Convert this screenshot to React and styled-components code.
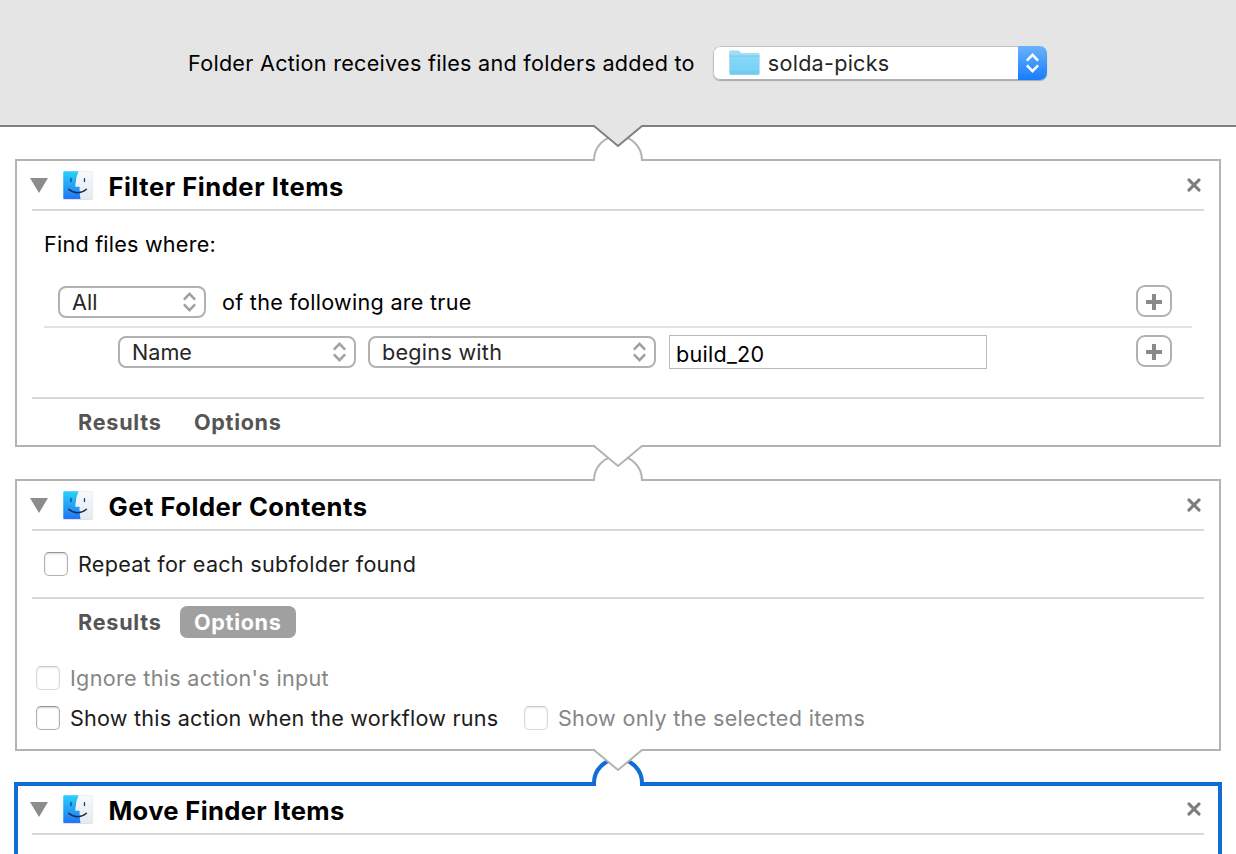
import React from "react";
import styled, { createGlobalStyle, css } from "styled-components";

const Global = createGlobalStyle`
  *, *::before, *::after { box-sizing: border-box; }
  html, body { margin: 0; padding: 0; height: 854px; overflow: hidden; background: #fff; }
  body { font-family: Inter, "Liberation Sans", sans-serif; font-size: 21.6px; line-height: 28px; color: #000; }
  button, input { font: inherit; color: inherit; margin: 0; padding: 0; background: none; border: 0; outline: 0; text-align: left; }
  svg { display: block; flex: none; overflow: visible; }
`;

const Window = styled.div`
  width: 1236px;
  height: 854px;
  overflow: hidden;
  display: flex;
  flex-direction: column;
`;

const Header = styled.header`
  flex: none;
  display: flex;
  align-items: center;
  height: 127px;
  padding: 1px 0 0 188px;
  background: #e5e5e5;
  border-bottom: 2px solid #808080;
`;

const Text = styled.span`
  white-space: nowrap;
  letter-spacing: ${(p) => p.$track ?? 0.27}px;
`;

const FolderSelect = styled.button`
  display: flex;
  align-items: stretch;
  width: 334px;
  height: 34px;
  margin-left: 18px;
  border-radius: 7px;
  background: #fff;
  box-shadow: 0 1px 1px 0 #a8a8a8;
  overflow: hidden;
`;

const FolderValue = styled.span`
  flex: 1;
  display: flex;
  align-items: center;
  gap: 8px;
  padding-left: 15px;
  border: 1px solid #c2c2c2;
  border-right: 0;
  border-bottom-color: #b0b0b0;
  border-radius: 7px 0 0 7px;
  color: #262626;
`;

const BlueCap = styled.span`
  width: 29px;
  display: grid;
  place-items: center;
  background: linear-gradient(#6bb2fa, #167dff);
`;

const Joint = styled.div`
  position: relative;
  z-index: 2;
  flex: none;
  width: 48px;
  height: ${(p) => p.$height}px;
  margin-left: 594px;
`;

const JointArt = styled.svg`
  position: absolute;
  left: 0;
  top: 0;
`;

const Card = styled.section`
  flex: none;
  display: flex;
  flex-direction: column;
  height: ${(p) => p.$height}px;
  margin: 0 ${(p) => (p.$active ? 14 : 15)}px;
  padding: 0 ${(p) => (p.$active ? 14 : 15)}px;
  border: ${(p) => (p.$active ? "4px solid #126cd6" : "2px solid #b3b3b3")};
  background: #fff;
`;

const CardHead = styled.div`
  flex: none;
  display: flex;
  align-items: center;
  height: ${(p) => (p.$active ? 49 : 50)}px;
  padding-right: 3px;
  padding-bottom: ${(p) => (p.$active ? 1 : 0)}px;
  border-bottom: 2px solid #d8d8d8;
`;

const Disclosure = styled.button`
  width: 18px;
  margin-left: -2px;
  margin-right: 15px;
`;

const Title = styled.h2`
  flex: 1;
  margin: 0;
  padding: 3px 0 0 15.4px;
  font-size: 25.6px;
  font-weight: 700;
  line-height: 32px;
`;

const Intro = styled.div`
  display: flex;
  align-items: center;
  height: 66px;
  padding-left: 12px;
`;

const Rule = styled.div`
  display: flex;
  align-items: center;
  height: ${(p) => p.$height}px;
  margin: 0 12px;
  padding-left: ${(p) => p.$indent}px;
  padding-right: 20px;
  ${(p) => p.$divided && css`border-bottom: 2px solid #e3e3e3;`}
`;

const Select = styled.button`
  display: flex;
  align-items: center;
  justify-content: space-between;
  width: ${(p) => p.$width}px;
  height: 32px;
  margin-right: ${(p) => p.$gap}px;
  padding: 0 8.5px 0 12px;
  border: 2px solid #b1b1b1;
  border-radius: 8px;
  color: #262626;
`;

const Field = styled.input`
  width: 318px;
  height: 34px;
  padding: 3px 0 0 6px;
  border: 1px solid #b9b9b9;
  background: #fff;
  letter-spacing: 0.25px;
`;

const AddButton = styled.button`
  display: grid;
  place-items: center;
  width: 36px;
  height: 32px;
  margin: -2px 0 0 auto;
  border: 2px solid #b1b1b1;
  border-radius: 9px;
`;

const PlusIcon = styled.svg`
  margin-top: 2px;
`;

const Spacer = styled.div`
  flex: 1;
`;

const Tabs = styled.div`
  display: flex;
  align-items: center;
  height: 48px;
  padding-left: 32px;
  gap: 5px;
  border-top: 2px solid #d8d8d8;
  font-weight: 700;
`;

const Tab = styled.button`
  width: ${(p) => p.$width}px;
  height: 32px;
  padding: 0 14px;
  border-radius: 7px;
  white-space: nowrap;
  color: ${(p) => (p.$on ? "#fff" : "#555")};
  background: ${(p) => (p.$on ? "#a0a0a0" : "transparent")};
`;

const Options = styled.div`
  padding-bottom: 11px;
`;

const CheckRow = styled.div`
  display: flex;
  align-items: center;
  height: ${(p) => p.$height}px;
  padding-left: ${(p) => p.$indent}px;
  gap: 25.5px;
`;

const Check = styled.label`
  display: flex;
  align-items: center;
  gap: 10px;
  color: ${(p) => (p.$disabled ? "#868686" : "#1c1c1c")};
`;

const Box = styled.span`
  width: 24px;
  height: 24px;
  border: 1px solid ${(p) => (p.$disabled ? "#d6d6d6" : "#b0b0b0")};
  border-top-color: ${(p) => (p.$disabled ? "#cccccc" : "#969696")};
  border-radius: 5px;
  background: #fff;
  box-shadow: inset 0 1px 2px ${(p) => (p.$disabled ? "#e6e6e6" : "#d4d4d4")};
`;

const Chevrons = ({ color = "#a0a0a0" }) => (
  <svg width="13" height="20" viewBox="0 0 13 20" fill="none" stroke={color} strokeWidth="2.5">
    <path d="M0.9 7.6 6.5 1.9l5.6 5.7M0.9 12.4l5.6 5.7 5.6-5.7" />
  </svg>
);

const Plus = () => (
  <PlusIcon width="16" height="16" viewBox="0 0 16 16" stroke="#8a8a8a" strokeWidth="4">
    <path d="M8 0v16M0 8h16" />
  </PlusIcon>
);

const Cross = () => (
  <svg width="14" height="14" viewBox="0 0 14 14" stroke="#7d7d7d" strokeWidth="3" strokeLinecap="round">
    <path d="M1.9 1.9l10.2 10.2M12.1 1.9L1.9 12.1" />
  </svg>
);

const Folder = () => (
  <svg width="31" height="26" viewBox="0 0 31 26">
    <defs>
      <linearGradient id="folder" x1="0" y1="0" x2="0" y2="1">
        <stop offset="0" stopColor="#87d9f8" />
        <stop offset="1" stopColor="#77d0f5" />
      </linearGradient>
    </defs>
    <path d="M.5 2Q.5.8 1.7.8H9q.9 0 1.5.8l1.1 1.3q.4.5 1 .5h16.6q1.2 0 1.2 1.2v19q0 1.2-1.2 1.2H1.7Q.5 24.8.5 23.6z" fill="#6bc0e4" />
    <path d="M.5 2Q.5.8 1.7.8H9q.9 0 1.5.8l1.1 1.3q.4.5 1 .5h16.6q1.2 0 1.2 1.2V7H.5z" fill="#a0def5" />
    <path d="M.8 6h29.4v16.8q0 1-1 1H1.8q-1 0-1-1z" fill="url(#folder)" />
    <path d="M.8 6h29.4M.8 22h29.4" stroke="#66c3e9" strokeWidth=".7" />
  </svg>
);

const Finder = () => (
  <svg width="30" height="29" viewBox="0 0 30 29">
    <defs>
      <linearGradient id="faceL" x1="0" y1="0" x2="0" y2="1">
        <stop offset="0" stopColor="#27d0fb" />
        <stop offset="1" stopColor="#2374f5" />
      </linearGradient>
      <linearGradient id="faceR" x1="0" y1="0" x2="0" y2="1">
        <stop offset="0" stopColor="#f7f9fc" />
        <stop offset="1" stopColor="#e5ebf3" />
      </linearGradient>
    </defs>
    <rect x=".3" y="27" width="29.4" height="1.6" rx=".6" fill="#c3c9d2" />
    <rect x=".3" y=".3" width="29.4" height="27.7" rx="1" fill="url(#faceR)" stroke="#dce1e8" strokeWidth=".5" />
    <path d="M1.3.3H15.4Q12.6 7 12.2 15.8H16.6Q16.3 22 17.5 28H1.3q-1 0-1-1V1.3q0-1 1-1z" fill="url(#faceL)" />
    <path d="M8 7.7v2.8M21.5 7.7v2.8" stroke="#173a63" strokeWidth="1.3" strokeLinecap="round" />
    <path d="M5.8 18.2Q14.5 25.3 23.5 18.2" fill="none" stroke="#173052" strokeWidth="1.4" strokeLinecap="round" />
  </svg>
);

const Link = ({ height, top, fill, active }) => {
  const edge = height + 1;
  const w = active ? 4 : 2;
  const base = active ? height + 2 : edge;
  return (
    <Joint $height={height}>
      <JointArt width="48" height={height} viewBox={`0 0 48 ${height}`} fill="none">
        <path d={`M0 ${base - w / 2 - 1}h48v${w + 2}H0z`} fill="#fff" />
        <path d={`M0 ${base + w / 2}V${edge}a24 24 0 0 1 48 0V${base + w / 2}`} fill="#fff" stroke={active ? "#126cd6" : "#b3b3b3"} strokeWidth={w} />
        <path d="M0 -3V-1L24 19L48 -1V-3z" fill={fill} />
        <path d="M-.4 -1H0L24 19L48 -1h.4" stroke={top} strokeWidth="2" />
      </JointArt>
    </Joint>
  );
};

const Head = ({ children, active, track = 0.53 }) => (
  <CardHead $active={active}>
    <Disclosure aria-label="Toggle">
      <svg width="18" height="15" viewBox="0 0 18 15"><path d="M0 0h18L9 15z" fill="#8c8c8c" /></svg>
    </Disclosure>
    <Finder />
    <Title><Text $track={track}>{children}</Text></Title>
    <Cross />
  </CardHead>
);

const CheckItem = ({ children, disabled, track }) => (
  <Check $disabled={disabled}>
    <Box $disabled={disabled} />
    <Text $track={track}>{children}</Text>
  </Check>
);

const TabBar = ({ optionsOpen }) => (
  <Tabs>
    <Tab $width={111}><Text $track={0.75}>Results</Text></Tab>
    <Tab $width={116} $on={optionsOpen}><Text $track={0.66}>Options</Text></Tab>
  </Tabs>
);

export default function App() {
  return (
    <Window>
      <Global />
      <Header>
        <Text>Folder Action receives files and folders added to</Text>
        <FolderSelect>
          <FolderValue><Folder /><Text $track={0.25}>solda-picks</Text></FolderValue>
          <BlueCap><Chevrons color="#fff" /></BlueCap>
        </FolderSelect>
      </Header>

      <Link height={32} top="#808080" fill="#e5e5e5" />
      <Card $height={288}>
        <Head>Filter Finder Items</Head>
        <Intro><Text $track={0.22}>Find files where:</Text></Intro>
        <Rule $height={51} $indent={14} $divided>
          <Select $width={148} $gap={16}><Text $track={0}>All</Text><Chevrons /></Select>
          <Text $track={0.27}>of the following are true</Text>
          <AddButton aria-label="Add"><Plus /></AddButton>
        </Rule>
        <Rule $height={48} $indent={74}>
          <Select $width={238} $gap={12}><Text $track={0}>Name</Text><Chevrons /></Select>
          <Select $width={288} $gap={13}><Text>begins with</Text><Chevrons /></Select>
          <Field defaultValue="build_20" />
          <AddButton aria-label="Add"><Plus /></AddButton>
        </Rule>
        <Spacer />
        <TabBar />
      </Card>

      <Link height={32} top="#b3b3b3" fill="#fff" />
      <Card $height={272}>
        <Head>Get Folder Contents</Head>
        <CheckRow $height={66} $indent={12}><CheckItem track={0.26}>Repeat for each subfolder found</CheckItem></CheckRow>
        <TabBar optionsOpen />
        <Spacer />
        <Options>
          <CheckRow $height={40} $indent={4}><CheckItem disabled track={0.3}>Ignore this action's input</CheckItem></CheckRow>
          <CheckRow $height={40} $indent={4}>
            <CheckItem track={0.23}>Show this action when the workflow runs</CheckItem>
            <CheckItem disabled track={0.31}>Show only the selected items</CheckItem>
          </CheckRow>
        </Options>
      </Card>

      <Link height={31} top="#b3b3b3" fill="#fff" active />
      <Card $height={90} $active>
        <Head active track={0.33}>Move Finder Items</Head>
      </Card>
    </Window>
  );
}
